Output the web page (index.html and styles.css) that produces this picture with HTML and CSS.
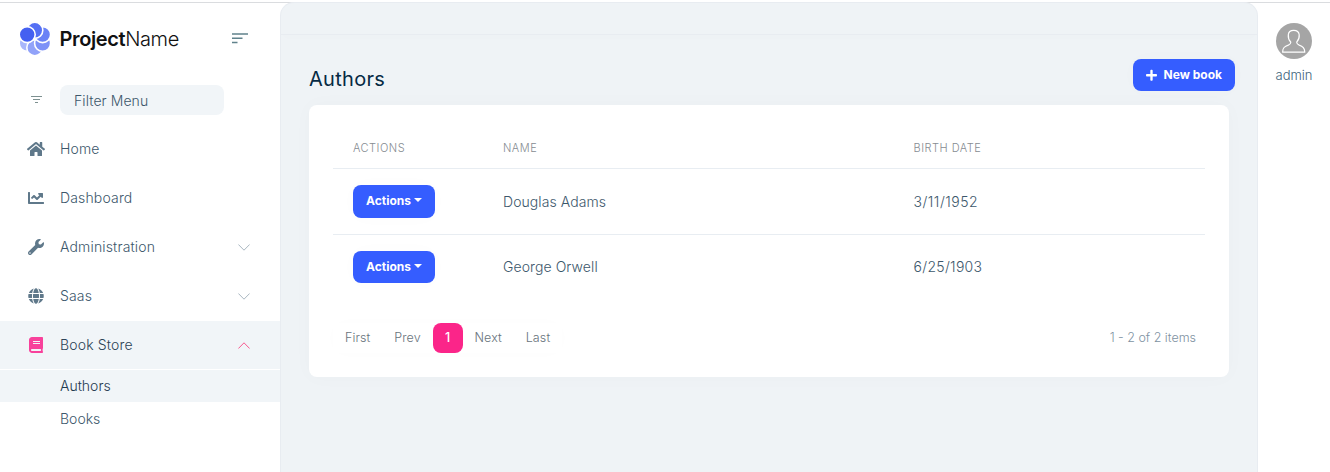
FILE: index.html
```
<!DOCTYPE html>
<html lang="en">
<head>
<meta charset="utf-8">
<title>Authors</title>
<link rel="stylesheet" href="styles.css">
</head>
<body>
<div class="app">
  <aside class="sidebar">
    <header class="brand">
      <svg class="logo" viewBox="0 0 32 34">
        <g stroke="#fff" stroke-width="1.600">
          <circle cx="8.2" cy="21.3" r="8" fill="#a9b7fb"/>
          <circle cx="15.8" cy="25.700" r="8" fill="#91a2f9"/>
          <circle cx="23.6" cy="21.3" r="8" fill="#7e92f7"/>
          <circle cx="23.6" cy="12.600" r="8" fill="#6a82f6"/>
          <circle cx="15.8" cy="8.300" r="8" fill="#5570f4"/>
          <circle cx="8.2" cy="12.6" r="8" fill="#4460f1"/>
        </g>
      </svg>
      <span class="brand-name"><b>Project</b>Name</span>
      <svg class="toggle" viewBox="0 0 16 11"><path d="M0 1h16M0 5.300h10.500M0 9.500h5.500" stroke="#60828c" stroke-width="1.500"/></svg>
    </header>
    <div class="filter">
      <svg class="filter-icon" viewBox="0 0 11 8"><path d="M0 .5h11M2 3.500h7M4 6.500h3" stroke="#7d9090"/></svg>
      <div class="filter-input">Filter Menu</div>
    </div>
    <nav class="menu">
      <a class="item"><svg class="icon" viewBox="0 0 576 512"><path d="M280.37 148.26L96 300.11V464a16 16 0 0 0 16 16l112.06-.29a16 16 0 0 0 15.92-16V368a16 16 0 0 1 16-16h64a16 16 0 0 1 16 16v95.64a16 16 0 0 0 16 16.05L464 480a16 16 0 0 0 16-16V300L295.67 148.26a12.19 12.19 0 0 0-15.3 0zM571.6 251.47L488 182.56V44.05a12 12 0 0 0-12-12h-56a12 12 0 0 0-12 12v72.61L318.47 43a48 48 0 0 0-61 0L4.34 251.47a12 12 0 0 0-1.6 16.9l25.5 31A12 12 0 0 0 45.15 301l235.22-193.74a12.19 12.19 0 0 1 15.3 0L530.9 301a12 12 0 0 0 16.9-1.6l25.5-31a12 12 0 0 0-1.7-16.93z"/></svg><span>Home</span></a>
      <a class="item"><svg class="icon" viewBox="0 0 512 512"><path d="M496 384H64V80c0-8.84-7.16-16-16-16H16C7.16 64 0 71.16 0 80v336c0 17.67 14.33 32 32 32h464c8.84 0 16-7.16 16-16v-32c0-8.84-7.16-16-16-16zM464 96H345.94c-21.38 0-32.09 25.85-16.97 40.97l32.4 32.4L288 242.75l-73.37-73.37c-12.5-12.5-32.76-12.5-45.25 0l-68.69 68.69c-6.25 6.25-6.25 16.38 0 22.63l22.62 22.62c6.25 6.25 16.38 6.25 22.63 0L192 237.25l73.37 73.37c12.5 12.5 32.76 12.5 45.25 0l96-96 32.4 32.4c15.12 15.12 40.97 4.41 40.97-16.97V112c.01-8.84-7.15-16-15.99-16z"/></svg><span>Dashboard</span></a>
      <a class="item"><svg class="icon" viewBox="0 0 512 512"><path d="M507.73 109.1c-2.24-9.03-13.54-12.09-20.12-5.51l-74.36 74.36-67.88-11.31-11.31-67.88 74.36-74.36c6.62-6.62 3.43-17.9-5.66-20.16-47.38-11.74-99.55.91-136.58 37.93-39.64 39.64-50.55 97.1-34.05 147.2L18.74 402.76c-24.99 24.99-24.99 65.51 0 90.5 24.99 24.99 65.51 24.99 90.5 0l213.21-213.21c50.12 16.71 107.47 5.68 147.37-34.22 37.07-37.07 49.7-89.32 37.91-136.73zM64 472c-13.25 0-24-10.75-24-24 0-13.26 10.75-24 24-24s24 10.74 24 24c0 13.25-10.75 24-24 24z"/></svg><span>Administration</span><svg class="chevron" viewBox="0 0 12 7"><path d="M.4.5L6 6.200 11.600.5"/></svg></a>
      <a class="item"><svg class="icon" viewBox="0 0 496 512"><path d="M336.5 160C322 70.7 287.8 8 248 8s-74 62.7-88.5 152h177zM152 256c0 22.2 1.2 43.5 3.3 64h185.3c2.1-20.5 3.3-41.8 3.3-64s-1.2-43.5-3.3-64H155.3c-2.1 20.5-3.3 41.8-3.3 64zm324.7-96c-28.6-67.9-86.5-120.4-158-141.6 24.4 33.8 41.2 84.7 50 141.6h108zM177.2 18.4C105.8 39.6 47.8 92.1 19.3 160h108c8.7-56.9 25.5-107.8 49.9-141.6zM487.4 192H372.7c2.1 21 3.3 42.5 3.3 64s-1.2 43-3.3 64h114.6c5.5-20.5 8.6-41.8 8.6-64s-3.1-43.5-8.5-64zM120 256c0-21.5 1.2-43 3.3-64H8.6C3.2 212.5 0 233.8 0 256s3.2 43.5 8.6 64h114.6c-2-21-3.2-42.5-3.2-64zm39.5 96c14.500 89.300 48.700 152 88.500 152s74-62.700 88.500-152h-177zm159.300 141.600c71.400-21.200 129.400-73.700 158-141.600h-108c-8.800 56.900-25.600 107.800-50 141.600zM19.300 352c28.600 67.900 86.500 120.400 158 141.600-24.400-33.800-41.200-84.700-50-141.600h-108z"/></svg><span>Saas</span><svg class="chevron" viewBox="0 0 12 7"><path d="M.4.5L6 6.200 11.600.5"/></svg></a>
      <a class="item open"><svg class="icon" viewBox="0 0 448 512"><path d="M448 360V24c0-13.3-10.7-24-24-24H96C43 0 0 43 0 96v320c0 53 43 96 96 96h328c13.3 0 24-10.7 24-24v-16c0-7.5-3.5-14.3-8.9-18.7-4.2-15.4-4.2-59.3 0-74.7 5.4-4.3 8.9-11.1 8.9-18.6zM128 134c0-3.3 2.7-6 6-6h212c3.3 0 6 2.7 6 6v20c0 3.3-2.7 6-6 6H134c-3.3 0-6-2.7-6-6v-20zm0 64c0-3.3 2.7-6 6-6h212c3.3 0 6 2.7 6 6v20c0 3.3-2.7 6-6 6H134c-3.3 0-6-2.7-6-6v-20zm253.4 250H96c-17.7 0-32-14.3-32-32 0-17.6 14.4-32 32-32h285.4c-1.9 17.1-1.9 46.9 0 64z"/></svg><span>Book Store</span><svg class="chevron" viewBox="0 0 12 7"><path d="M.4 6.500L6 .8l5.600 5.700"/></svg></a>
      <a class="subitem active">Authors</a>
      <a class="subitem">Books</a>
    </nav>
  </aside>
  <main class="content">
    <div class="topbar"></div>
    <div class="title-row">
      <h1>Authors</h1>
      <button class="btn new"><svg class="plus" viewBox="0 0 448 512"><path fill="#fff" d="M416 208H272V64c0-17.67-14.33-32-32-32h-32c-17.67 0-32 14.33-32 32v144H32c-17.67 0-32 14.33-32 32v32c0 17.67 14.33 32 32 32h144v144c0 17.67 14.33 32 32 32h32c17.67 0 32-14.33 32-32V304h144c17.67 0 32-14.33 32-32v-32c0-17.67-14.33-32-32-32z"/></svg>New book</button>
    </div>
    <section class="card">
      <div class="row head"><span>ACTIONS</span><span>NAME</span><span>BIRTH DATE</span></div>
      <div class="row first"><span><button class="btn">Actions<i class="caret"></i></button></span><span>Douglas Adams</span><span class="date wide">3/11/1952</span></div>
      <div class="row second"><span><button class="btn">Actions<i class="caret"></i></button></span><span>George Orwell</span><span class="date">6/25/1903</span></div>
      <footer class="footer">
        <div class="pager"><a>First</a><a>Prev</a><a class="current">1</a><a>Next</a><a>Last</a></div>
        <span class="total">1 - 2 of 2 items</span>
      </footer>
    </section>
  </main>
  <aside class="profile">
    <svg class="avatar" viewBox="0 0 36 36"><circle cx="18" cy="18" r="18" fill="#a5a5a5"/><path d="M14.800 19.200C12.800 17 12 14.600 12.300 11.700 12.500 8.800 14.600 7.300 17.700 7.300s5.200 1.500 5.500 4.400c.3 2.900-.6 5.300-2.500 7.500.1 1.700 1 2.300 2.500 2.900 3.600 1.200 5.500 2.400 5.500 6.400v.7H6.700v-.7c0-4 1.900-5.200 5.600-6.400 1.500-.6 2.400-1.200 2.500-2.900z" fill="none" stroke="#fff" stroke-width="1.200"/></svg>
    <span>admin</span>
  </aside>
</div>
</body>
</html>
```
FILE: styles.css
```
* { box-sizing: border-box; }
body {
  margin: 0;
  font: 350 14px/20px Inter, "Liberation Sans", sans-serif;
  color: #3c576b;
  background: #fff;
}
.app {
  display: grid;
  grid-template-columns: 280px 978px 72px;
  height: 472px;
  padding-top: 2px;
  overflow: hidden;
  background: linear-gradient(#dadcdf, #dadcdf) 0 2px / 100% 1px no-repeat;
}
.brand { display: flex; align-items: center; height: 72px; padding: 2px 32px 0 19px; }
.logo { width: 32px; height: 34px; }
.brand-name { margin-left: 8.500px; font-size: 20px; font-weight: 300; letter-spacing: -.38px; color: #111; }
.brand-name b { font-weight: 600; }
.toggle { width: 16px; height: 11px; margin: -2px 0 0 auto; }
.filter { display: flex; align-items: center; margin-top: 11px; padding-left: 31px; letter-spacing: .08px; }
.filter-icon { width: 11px; height: 8px; margin-right: 18px; }
.filter-input {
  width: 164px;
  height: 30px;
  padding: 6px 14px;
  border-radius: 8px;
  background: #f1f5f8;
}
.menu { margin-top: 10px; }
.item {
  display: flex;
  align-items: center;
  height: 49px;
  padding: 0 30px 2px 26px;
  letter-spacing: .16px;
}
.icon { width: 20px; height: 16px; margin-right: 14px; fill: #5f788a; }
.chevron { width: 12px; height: 7px; margin: 1px 0 0 auto; fill: none; stroke: #a9b7c1; }
.open { height: 48px; margin-bottom: 1px; padding-bottom: 0; background: #f1f5f8; color: #2c4356; }
.open .icon { margin-top: -1px; fill: #f8419b; }
.open .chevron { margin-top: 0; stroke: #f8588f; }
.subitem { display: block; height: 33px; padding: 7px 60px; }
.active { height: 32px; padding-top: 6px; background: #f1f5f8; color: #1f3a50; }
.content {
  border: 1px solid #e8ecf1;
  border-bottom: 0;
  border-radius: 14px 14px 0 0;
  background: #eff3f6;
}
.topbar { height: 32px; border-bottom: 1px solid #e8ecf1; box-shadow: 0 4px 10px rgba(0, 20, 40, .006); }
.title-row { display: flex; align-items: center; justify-content: space-between; height: 70px; padding: 18px 22px 0 28px; }
h1 { margin: 0; font-size: 20px; font-weight: 400; line-height: 28px; letter-spacing: .3px; color: #062a44; }
.btn {
  display: inline-flex;
  align-items: center;
  height: 33px;
  padding: 0 13px 1px;
  border: 0;
  border-radius: 8px;
  background: #355dff;
  color: #fff;
  font: 700 12px/18px Inter, sans-serif;
  box-shadow: 0 0 20px rgba(20, 70, 80, .015);
}
.new { height: 32px; margin-bottom: 8px; padding-bottom: 0; }
.plus { width: 11px; height: 12.500px; margin-right: 6.500px; }
.card {
  width: 920px;
  height: 272px;
  margin-left: 28px;
  padding: 24px 24px 0;
  border-radius: 8px;
  background: #fff;
  box-shadow: 0 0 20px rgba(20, 70, 80, .025);
}
.row { display: grid; grid-template-columns: 150px 410.500px 1fr; align-items: center; padding-left: 20px; letter-spacing: .08px; }
.head { height: 40px; padding-bottom: 1px; border-bottom: 1px solid #e8edf2; font-size: 11px; letter-spacing: .5px; color: #858b91; }
.first { height: 66px; border-bottom: 1px solid #e8edf2; }
.second { height: 65px; padding-bottom: 1px; }
.second .btn { height: 32px; }
.row > span { display: flex; }
.date { letter-spacing: .3px; }
.date.wide { letter-spacing: .5px; }
.caret { margin: -2px 0 0 3px; border: 4px solid transparent; border-top-color: #fff; border-bottom: 0; }
.footer { display: flex; align-items: center; justify-content: space-between; margin-top: 23px; padding-right: 9px; font-size: 12.500px; color: #68737c; }
.pager { display: flex; border-radius: 8px; letter-spacing: .1px; box-shadow: 0 0 20px rgba(20, 70, 80, .012); }
.pager a { height: 30px; padding: 5px 11.900px; }
.pager a:first-child { padding-left: 12px; }
.pager .current { width: 30px; padding: 5px 0; border-radius: 8px; background: #fb2589; color: #fff; text-align: center; font-weight: 500; }
.total { color: #8092a2; }
.profile { display: flex; flex-direction: column; align-items: center; padding-top: 21px; font-size: 13px; color: #41637c; }
.avatar { width: 36px; height: 36px; margin-bottom: 6px; }
```
